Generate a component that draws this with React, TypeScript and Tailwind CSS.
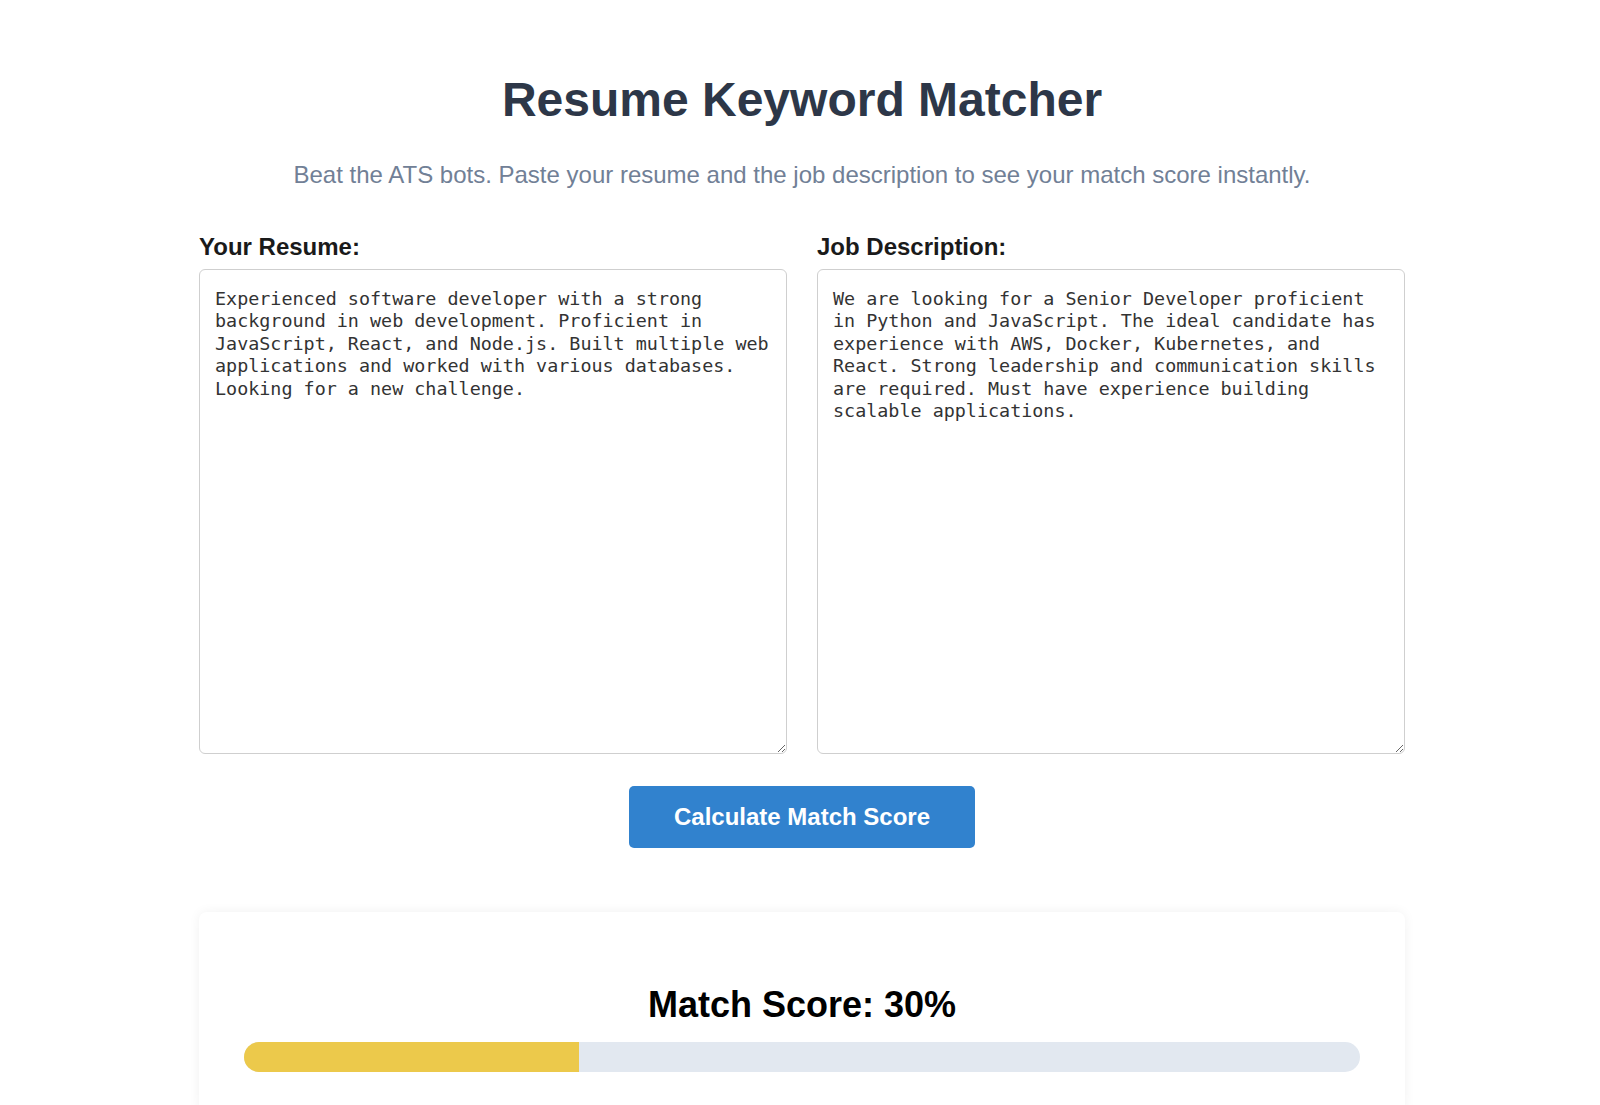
import { useState } from 'react';

const resumeText =
  'Experienced software developer with a strong\nbackground in web development. Proficient in\nJavaScript, React, and Node.js. Built multiple web\napplications and worked with various databases.\nLooking for a new challenge.';

const jobText =
  'We are looking for a Senior Developer proficient\nin Python and JavaScript. The ideal candidate has\nexperience with AWS, Docker, Kubernetes, and\nReact. Strong leadership and communication skills\nare required. Must have experience building\nscalable applications.';

function Field({ label, value, onChange }: { label: string; value: string; onChange: (v: string) => void }) {
  return (
    <div className="flex flex-1 flex-col">
      <label className="mb-2 text-[24px] font-bold leading-[28px] text-[#1a1a1a]">{label}</label>
      <textarea
        value={value}
        onChange={(e) => onChange(e.target.value)}
        className="h-[485px] w-full rounded-[6px] border border-[#cfcfcf] bg-white px-[15px] pb-4 pt-[18px] font-['DejaVu_Sans_Mono',monospace] text-[18.4px] leading-[22.4px] text-[#333] outline-none"
      />
    </div>
  );
}

export default function App() {
  const [resume, setResume] = useState(resumeText);
  const [job, setJob] = useState(jobText);
  const score = 30;

  return (
    <div className="min-h-[1105px] bg-white pl-1 font-['Liberation_Sans',Arial,sans-serif]">
      <div className="mx-auto flex w-[1206px] flex-col items-center pt-[72px]">
        <h1 className="text-[48px] font-bold leading-[55px] text-[#2d3748]">Resume Keyword Matcher</h1>
        <p className="mt-[34px] whitespace-nowrap text-[24px] leading-[28px] text-[#718096]">
          Beat the ATS bots. Paste your resume and the job description to see your match score instantly.
        </p>

        <div className="mt-11 flex w-full gap-[30px]">
          <Field label="Your Resume:" value={resume} onChange={setResume} />
          <Field label="Job Description:" value={job} onChange={setJob} />
        </div>

        <button className="mt-8 h-[62px] rounded-[5px] bg-[#3182ce] px-[45px] text-[24px] font-bold text-white">
          Calculate Match Score
        </button>

        <div className="mt-16 w-full rounded-lg bg-white px-[45px] pb-10 pt-[72px] shadow-[0_0_12px_rgba(0,0,0,0.06)]">
          <h2 className="text-center text-[36px] font-bold leading-[41px] text-black">Match Score: {score}%</h2>
          <div className="mt-[17px] h-[30px] w-full overflow-hidden rounded-full bg-[#e2e8f0]">
            <div className="h-full bg-[#ecc94b]" style={{ width: `${score}%` }} />
          </div>
        </div>
      </div>
    </div>
  );
}
